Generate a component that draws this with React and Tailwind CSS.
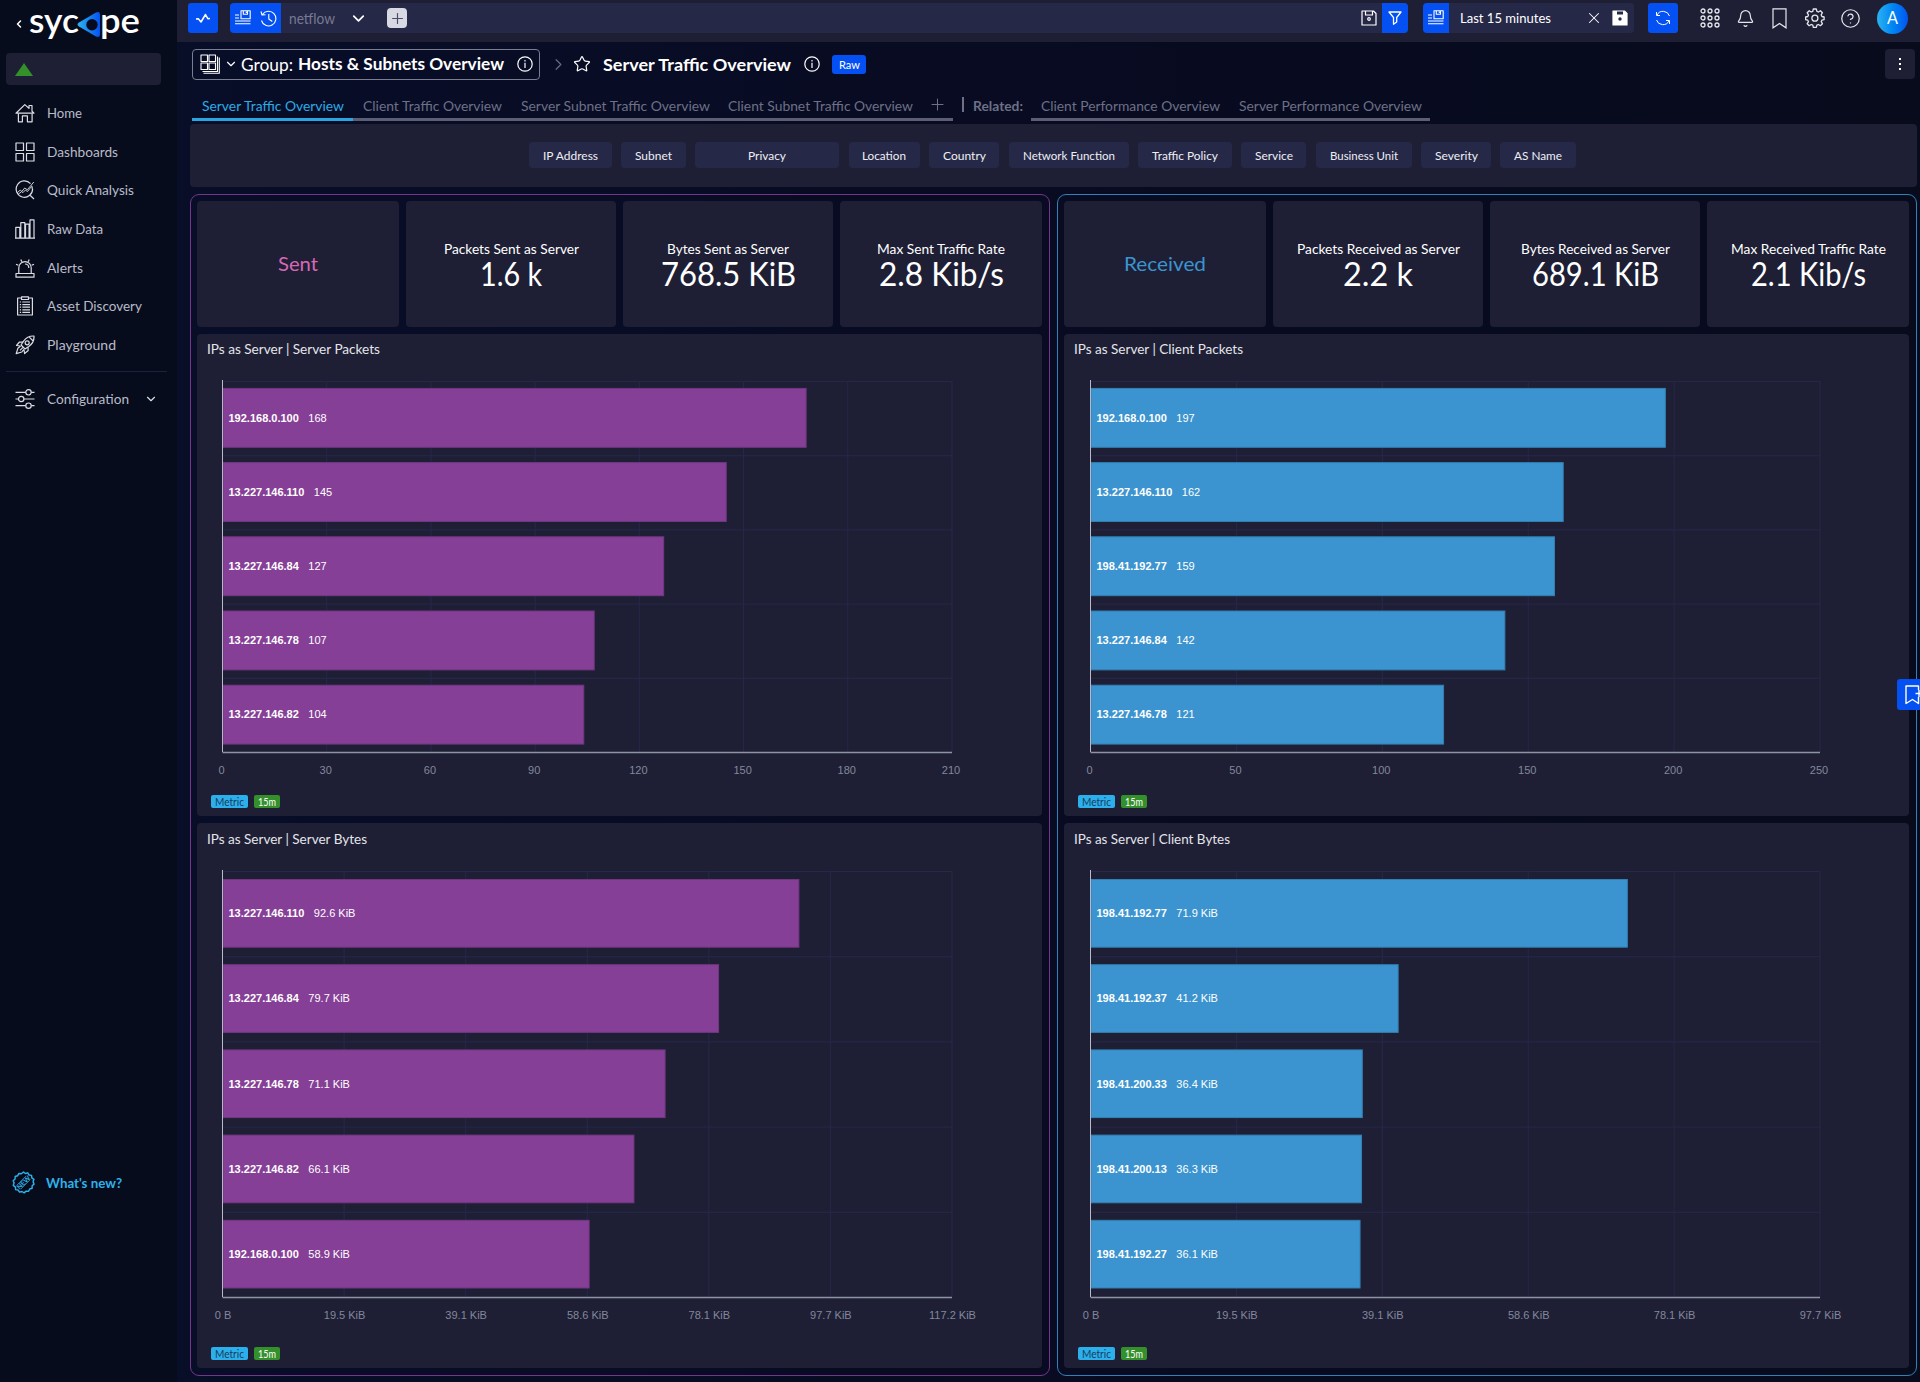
import {
  Bell,
  Bookmark,
  ChevronDown,
  ChevronLeft,
  ChevronRight,
  CircleHelp,
  Plus,
  Star,
  X,
} from "lucide-react"

const navItems = [
  { label: "Home", icon: "home", width: 35 },
  { label: "Dashboards", icon: "dashboards", width: 71 },
  { label: "Quick Analysis", icon: "analysis", width: 87 },
  { label: "Raw Data", icon: "raw", width: 56 },
  { label: "Alerts", icon: "alerts", width: 36 },
  { label: "Asset Discovery", icon: "assets", width: 95 },
  { label: "Playground", icon: "playground", width: 69 },
]

const tabs = [
  { label: "Server Traffic Overview", box: "w-[161px]", width: 142 },
  { label: "Client Traffic Overview", box: "w-[158px]", width: 139 },
  { label: "Server Subnet Traffic Overview", box: "w-[207px]", width: 189 },
  { label: "Client Subnet Traffic Overview", box: "w-[205px]", width: 185 },
]

const relatedTabs = [
  { label: "Client Performance Overview", box: "w-[198px]", width: 179 },
  { label: "Server Performance Overview", box: "w-[201px]", width: 183 },
]

const filters = [
  { label: "IP Address", box: "w-[83px]", width: 55 },
  { label: "Subnet", box: "w-[65px]", width: 37 },
  { label: "Privacy", box: "w-[144px]", width: 38 },
  { label: "Location", box: "w-[71px]", width: 44 },
  { label: "Country", box: "w-[70px]", width: 43 },
  { label: "Network Function", box: "w-[120px]", width: 92 },
  { label: "Traffic Policy", box: "w-[94px]", width: 66 },
  { label: "Service", box: "w-[65px]", width: 38 },
  { label: "Business Unit", box: "w-[96px]", width: 68 },
  { label: "Severity", box: "w-[70px]", width: 43 },
  { label: "AS Name", box: "w-[76px]", width: 48 },
]

const groups = [
  {
    title: "Sent",
    titleWidth: 40,
    titleColor: "#d668b4",
    border: "border-[#74368a]",
    plotLeft: 25.5,
    fill: "#863f97",
    stroke: "#733782",
    stats: [
      { label: "Packets Sent as Server", width: 135, value: "1.6 k", valueWidth: 62 },
      { label: "Bytes Sent as Server", width: 122, value: "768.5 KiB", valueWidth: 135 },
      { label: "Max Sent Traffic Rate", width: 128, value: "2.8 Kib/s", valueWidth: 125 },
    ],
    packets: {
      title: "IPs as Server | Server Packets",
      titleWidth: 173,
      max: 210,
      ticks: ["0", "30", "60", "90", "120", "150", "180", "210"],
      rows: [
        ["192.168.0.100", 168, "168"],
        ["13.227.146.110", 145, "145"],
        ["13.227.146.84", 127, "127"],
        ["13.227.146.78", 107, "107"],
        ["13.227.146.82", 104, "104"],
      ],
    },
    bytes: {
      title: "IPs as Server | Server Bytes",
      titleWidth: 160,
      max: 117.2,
      ticks: ["0 B", "19.5 KiB", "39.1 KiB", "58.6 KiB", "78.1 KiB", "97.7 KiB", "117.2 KiB"],
      rows: [
        ["13.227.146.110", 92.6, "92.6 KiB"],
        ["13.227.146.84", 79.7, "79.7 KiB"],
        ["13.227.146.78", 71.1, "71.1 KiB"],
        ["13.227.146.82", 66.1, "66.1 KiB"],
        ["192.168.0.100", 58.9, "58.9 KiB"],
      ],
    },
  },
  {
    title: "Received",
    titleWidth: 82,
    titleColor: "#3b94cf",
    border: "border-[#2f81b6]",
    plotLeft: 26.5,
    fill: "#3b94cf",
    stroke: "#3280b4",
    stats: [
      { label: "Packets Received as Server", width: 163, value: "2.2 k", valueWidth: 70 },
      { label: "Bytes Received as Server", width: 149, value: "689.1 KiB", valueWidth: 127 },
      { label: "Max Received Traffic Rate", width: 155, value: "2.1 Kib/s", valueWidth: 115 },
    ],
    packets: {
      title: "IPs as Server | Client Packets",
      titleWidth: 169,
      max: 250,
      ticks: ["0", "50", "100", "150", "200", "250"],
      rows: [
        ["192.168.0.100", 197, "197"],
        ["13.227.146.110", 162, "162"],
        ["198.41.192.77", 159, "159"],
        ["13.227.146.84", 142, "142"],
        ["13.227.146.78", 121, "121"],
      ],
    },
    bytes: {
      title: "IPs as Server | Client Bytes",
      titleWidth: 156,
      max: 97.7,
      ticks: ["0 B", "19.5 KiB", "39.1 KiB", "58.6 KiB", "78.1 KiB", "97.7 KiB"],
      rows: [
        ["198.41.192.77", 71.9, "71.9 KiB"],
        ["198.41.192.37", 41.2, "41.2 KiB"],
        ["198.41.200.33", 36.4, "36.4 KiB"],
        ["198.41.200.13", 36.3, "36.3 KiB"],
        ["198.41.192.27", 36.1, "36.1 KiB"],
      ],
    },
  },
]

// Label set to an exact advance width
function Label({ children, width, size = 14, weight = 400, color = "currentColor" }) {
  const height = Math.round(size * 1.4)
  return (
    <svg width={width} height={height} className="block shrink-0 overflow-visible">
      <text
        x="0"
        y={Math.round(size * 1.05)}
        textLength={width}
        lengthAdjust="spacingAndGlyphs"
        fontSize={size}
        fontWeight={weight}
        fill={color}
      >
        {children}
      </text>
    </svg>
  )
}

function Icon({ children, size = 20, box = 20, stroke = 1.2, className = "" }) {
  return (
    <svg
      width={size}
      height={size}
      viewBox={`0 0 ${box} ${box}`}
      fill="none"
      stroke="currentColor"
      strokeWidth={stroke}
      strokeLinejoin="round"
      className={`block shrink-0 ${className}`}
    >
      {children}
    </svg>
  )
}

const navIcons = {
  home: (
    <>
      <path d="M1 10.2 9.8 1.6 14 5.4V2.5h3v5.8l2 1.9H1Z" />
      <path d="M3.4 10.4v8.4h4v-5.9h5v5.9h4.7v-8.4" />
    </>
  ),
  dashboards: (
    <>
      <rect x="1" y="1" width="7.5" height="7.5" />
      <rect x="11.5" y="1" width="7.5" height="7.5" />
      <rect x="1" y="11.5" width="7.5" height="7.5" />
      <rect x="11.5" y="11.5" width="7.5" height="7.5" />
    </>
  ),
  analysis: (
    <>
      <path d="M15.5 3.6A8.2 8.2 0 1 0 17.6 9M16.5 5.8c.6 1 .8 2 .8 3.2M14.8 15l4.2 4" />
      <path d="M2.2 12.8 5.3 10l1.5 1.5 2.9-3.5 2.6 1.8L18.8 2M3.5 14l3.2-2.4 1.2 1.1 2.4-2.6 2.2 1.4 3.6-4.5" strokeWidth=".9" />
    </>
  ),
  raw: (
    <>
      <path d="M.8 8.3h4v10.9h-4zM5.8 3.6h4v15.6h-4zM10.5 5.2h3.6v14h-3.6zM15 .9h4v18.3h-4zM0 19.2h20" />
    </>
  ),
  alerts: (
    <>
      <path d="M1 15.5h18v3.7H1zM3.8 15.5V9.8a6.2 6.2 0 0 1 12.4 0v5.7M10 6c2.3 0 3.8 1.5 3.8 4" />
      <path d="m1 6.2 2.3 1M5.8 1.5l1 2.2M14.2 1.5l-1 2.2M19 6.2l-2.3 1" />
    </>
  ),
  assets: (
    <>
      <path d="M6.5 2H2.6v17h14.8V2h-3.9M6.5.9h7v2.6h-7z" />
      <path d="M4.8 6h1.3M4.8 8.6h1.3M4.8 11.2h1.3M4.8 13.8h1.3M4.8 16.3h1.3M7.3 6H15M7.3 8.6H15M7.3 11.2H15M7.3 13.8H15M7.3 16.3H15" />
    </>
  ),
  playground: (
    <>
      <path d="M19 1c-4.7-.2-8 1.7-10.4 5.2L6 10l4 4 3.8-2.6C17.4 8.8 19.300 5.500 19 1ZM14 1.800 18.200 6" />
      <circle cx="12.2" cy="7.8" r="2" />
      <path d="M8 7.2 4.5 7 1.5 10.5 5.2 11M12.9 12l.3 3.5-3.600 3L9 14.800M5.600 11 2.900 13.200 1.200 18.600 6.800 17 8.900 14.300M5 15.400 8 12.400" />
    </>
  ),
  config: (
    <>
      <path d="M.5 3.3H10.7M16.3 3.3H19.5M.5 10H3.5M9 10h10.500M.5 16.700h10.200M16.300 16.700h3.200" />
      <circle cx="13.5" cy="3.3" r="2.7" />
      <circle cx="6.2" cy="10" r="2.7" />
      <circle cx="13.5" cy="16.7" r="2.7" />
    </>
  ),
}

function Logo() {
  return (
    <svg width="112" height="34" viewBox="0 0 112 34" className="block overflow-visible">
      <defs>
        <linearGradient id="logo" x1="0" y1="0" x2="1" y2="0">
          <stop offset="0" stopColor="#2cb5f2" />
          <stop offset="1" stopColor="#0453f0" />
        </linearGradient>
      </defs>
      <g fill="#fff" fontSize="34" fontWeight="600">
        <text x="-1" y="25" textLength="50" lengthAdjust="spacingAndGlyphs">syc</text>
        <text x="70" y="25" textLength="40" lengthAdjust="spacingAndGlyphs">pe</text>
      </g>
      <path
        d="M49 14.500 66 4.500q4-1.700 4 2v20q0 3.500-4 2L49 18.500q-3-2 0-4Z"
        fill="url(#logo)"
      />
      <circle cx="62" cy="16.700" r="5.700" fill="#070b1d" />
    </svg>
  )
}

function Sidebar() {
  return (
    <aside className="flex w-[177px] shrink-0 flex-col bg-[#070c1d] text-[#b9bbc8]">
      <div className="flex h-[53px] items-start gap-[5px] pt-[8px] pl-[13px]">
        <ChevronLeft size={12} strokeWidth={3} className="mt-[10px] text-white" />
        <Logo />
      </div>
      <div className="ml-[6px] flex h-8 w-[155px] items-center rounded bg-[#1e1f35] pl-[9px]">
        <svg width="18" height="13" className="block">
          <path d="M9 0 18 13H0Z" fill="#33902a" />
        </svg>
      </div>
      <nav className="mt-[9px] flex flex-col">
        {navItems.map((item) => (
          <div key={item.label} className="flex h-[38.6px] items-center gap-[12px] pl-[15px]">
            <Icon className="text-[#dcdde4]">{navIcons[item.icon]}</Icon>
            <Label width={item.width} size={14}>{item.label}</Label>
          </div>
        ))}
      </nav>
      <div className="mt-[7px] ml-[6px] h-px w-[161px] bg-[#1d2140]" />
      <div className="mt-[8px] flex h-[38px] items-center pl-[15px]">
        <Icon className="mr-[12px] text-[#dcdde4]">{navIcons.config}</Icon>
        <Label width={82} size={14}>Configuration</Label>
        <ChevronDown size={14} strokeWidth={2} className="ml-[15px] text-[#dcdde4]" />
      </div>
      <div className="mt-[753px] flex items-center gap-[11px] pl-[12px] text-[#2fb1ea]">
        <Icon size={23} box={24} stroke={1.5}>
          <path d="m12 1 2 1.600 2.500-.7 1.300 2.300 2.600.4.3 2.600 2.200 1.500L22 11.200l1 2.500-2 1.700v2.600l-2.500.8-1.200 2.300-2.600-.1-2 1.800-2.300-1.400-2.500.7-1.500-2.200-2.600-.5-.2-2.600L1.300 15 2.200 12.500 1.200 10.100l2-1.700.1-2.600 2.500-.8L7.100 2.700l2.600.2Z" />
          <text
            x="12"
            y="14.5"
            fontSize="7"
            fontWeight="700"
            fill="currentColor"
            stroke="none"
            textAnchor="middle"
            transform="rotate(-45 12 12)"
          >
            NEW
          </text>
          <path d="m5 15 10-10M9 19 19 9" strokeWidth=".8" />
        </Icon>
        <Label width={76} size={14} weight={700}>What's new?</Label>
      </div>
    </aside>
  )
}

function ListSaveIcon() {
  return (
    <Icon size={16} box={16} stroke={1.1}>
      <path d="M0 5h4M0 8h4M0 11h15.500M0 13.700h15.500M6 .8h9.200v8H6ZM8.300.8v3.500h4.200V.8M11.300 1.500v1.500" />
    </Icon>
  )
}

function InfoIcon() {
  return (
    <Icon size={16} box={16} stroke={1.2} className="text-white">
      <circle cx="8" cy="8" r="7.2" />
      <path d="M8 6.800V12M8 4v1.500" />
    </Icon>
  )
}

function TopBar() {
  return (
    <header className="flex h-[42px] items-start bg-[#1e1f35] pt-[3px] pl-[11px] text-white">
      <div className="flex size-[30px] items-center justify-center rounded-[3px] bg-[#0450f2]">
        <Icon size={16} box={16} stroke={1.5}>
          <path d="m1 9 2.300-.2L6 12l4.500-7.500 2.300 4.200L15 8.500" />
        </Icon>
      </div>
      <div className="ml-[12px] flex h-[30px] w-[1178px] items-center overflow-hidden rounded bg-[#262847]">
        <div className="flex h-full w-[51px] items-center gap-[9px] bg-[#0450f2] pl-[5px]">
          <ListSaveIcon />
          <Icon size={17} box={17} stroke={1.1}>
            <path d="M2.500 4.500A7.300 7.300 0 1 1 1.500 10.500M1 1.500l1 3.500 3.500-.3M8.800 4v5l3.500 2.500" />
          </Icon>
        </div>
        <div className="ml-[8px] text-[#777a92]">
          <Label width={46} size={15}>netflow</Label>
        </div>
        <ChevronDown size={19} strokeWidth={2.2} className="ml-[14px]" />
        <div className="ml-[19px] flex size-5 items-center justify-center rounded bg-[#d8d9e3]">
          <Plus size={17} strokeWidth={1.6} className="text-[#4a4c66]" />
        </div>
        <Icon size={16} box={16} stroke={1.2} className="ml-auto">
          <path d="M1 1h11.500L15 3.500V15H1ZM4.500 1v4h7V1" />
          <circle cx="8" cy="9" r="1.3" />
        </Icon>
        <div className="ml-[5px] flex h-full w-[26px] items-center justify-center bg-[#0450f2]">
          <Icon size={14} box={14} stroke={1.3}>
            <path d="M1 1h12L8.700 6.500V11L5.500 13.200V6.500Z" />
          </Icon>
        </div>
      </div>
      <div className="ml-[15px] flex h-[30px] w-[211px] items-center overflow-hidden rounded bg-[#262847]">
        <div className="flex h-full w-[26px] items-center justify-center bg-[#0450f2]">
          <ListSaveIcon />
        </div>
        <div className="ml-[11px]">
          <Label width={91} size={14}>Last 15 minutes</Label>
        </div>
        <X size={18} strokeWidth={1.4} className="ml-[34px]" />
        <Icon size={16} box={16} className="ml-[9px]">
          <path d="M1 1h11.500L15 3.500V15H1Z" fill="#fff" />
          <path d="M5 1.500h6v3H5Z" fill="#262847" stroke="none" />
          <circle cx="8" cy="9" r="1.7" fill="#262847" stroke="none" />
        </Icon>
      </div>
      <div className="ml-[14px] flex size-[30px] items-center justify-center rounded-[3px] bg-[#0450f2]">
        <Icon size={16} box={16} stroke={1}>
          <path d="M14.500 6A6.800 6.800 0 0 0 2 5M1.500 2v3.500H5M1.500 10A6.800 6.800 0 0 0 14 11M14.500 14v-3.500H11" />
        </Icon>
      </div>
      <div className="flex h-[30px] items-center text-[#e6e7ec]">
        <Icon size={20} box={20} stroke={1.3} className="ml-[22px]">
          {[3, 10, 17].map((y) =>
            [3, 10, 17].map((x) => <circle key={`${x}-${y}`} cx={x} cy={y} r="2" />)
          )}
        </Icon>
        <Bell size={19} strokeWidth={1.5} className="ml-[16px]" />
        <svg width="15" height="21" viewBox="0 0 15 21" fill="none" stroke="currentColor" strokeWidth="1.2" className="ml-[17px] block">
          <path d="M1 .8h13v19L7.500 15.500 1 19.800Z" />
        </svg>
        <Icon size={20} box={20} stroke={1.3} className="ml-[18px]">
          <path d="m8.300 1-.5 2.300-1.600.7-2-1.300-2 2.100L3.500 6.900l-.7 1.600-2.200.5v2.600l2.200.6.700 1.500-1.300 2 2 2 2-1.200 1.600.7.5 2.200h3l.6-2.200 1.500-.7 2 1.200 2-2-1.200-2 .7-1.500 2.200-.6V9l-2.200-.5-.7-1.600 1.200-2.100-2-2.100-2 1.300-1.500-.7L11.300 1Z" />
          <circle cx="9.9" cy="10.2" r="3" />
        </Icon>
        <CircleHelp size={21} strokeWidth={1.4} className="ml-[15px]" />
        <div className="ml-[16px] flex size-[31px] items-center justify-center rounded-full bg-linear-to-r from-[#2bb2f1] to-[#0553f1] text-white">
          <Label width={11} size={17}>A</Label>
        </div>
      </div>
    </header>
  )
}

function Breadcrumbs() {
  return (
    <div className="mt-[7px] flex h-[30px] items-center text-white">
      <div className="ml-[2px] flex h-[31px] w-[348px] items-center rounded border border-[#7b7e91] pl-[7px]">
        <Icon size={20} box={20} stroke={1.1}>
          <path d="M1 1h6.500v6.500H1ZM9 1h6.500v6.500H9ZM1 9h6.500v6.500H1ZM9 9h6.500v6.500H9ZM2.500 17.500h15v-15M3.500 19.300h15.800V3.500" />
        </Icon>
        <ChevronDown size={14} strokeWidth={2} className="mr-[3px] ml-[4px]" />
        <Label width={52} size={18}>Group:</Label>
        <div className="mr-[13px] ml-[5px]">
          <Label width={206} size={17} weight={700}>Hosts &amp; Subnets Overview</Label>
        </div>
        <InfoIcon />
      </div>
      <ChevronRight size={19} strokeWidth={1.5} className="ml-[9px] text-[#686b80]" />
      <Star size={18} strokeWidth={1.6} className="mr-[12px] ml-[5px]" />
      <div className="pt-px">
        <Label width={188} size={17} weight={700}>Server Traffic Overview</Label>
      </div>
      <div className="ml-[13px]">
        <InfoIcon />
      </div>
      <div className="ml-[12px] flex h-[19px] w-[34px] items-center justify-center rounded-[3px] bg-[#0450f2]">
        <Label width={21} size={12}>Raw</Label>
      </div>
      <div className="mr-[2px] ml-auto flex h-[30px] w-[30px] items-center justify-center rounded bg-[#1e1f35]">
        <Icon size={14} box={14} stroke={0}>
          <path d="M6 1h2v2H6zM6 6h2v2H6zM6 11h2v2H6z" fill="#fff" />
        </Icon>
      </div>
    </div>
  )
}

function Tabs() {
  return (
    <div className="mt-[11px] flex h-[31px] pl-[2px] text-[#6d7086]">
      <div className="flex">
        {tabs.map((tab, i) => (
          <div
            key={tab.label}
            className={`flex items-center border-b-[3px] pt-[3px] pl-[9.5px] ${tab.box} ${
              i === 0 ? "border-[#2aa6de] text-[#2cabe4]" : "border-[#5c5e73]"
            }`}
          >
            <Label width={tab.width} size={14}>{tab.label}</Label>
          </div>
        ))}
        <div className="flex w-[30px] items-center border-b-[3px] border-[#5c5e73] pt-[1px] pl-[5px]">
          <Plus size={19} strokeWidth={1.3} />
        </div>
      </div>
      <div className="mt-[7px] ml-[9px] h-[15px] w-[2px] bg-[#6d7086]" />
      <div className="mr-[8px] ml-[9px] flex items-center">
        <Label width={50} size={14} weight={700}>Related:</Label>
      </div>
      {relatedTabs.map((tab) => (
        <div key={tab.label} className={`flex items-center border-b-[3px] border-[#5c5e73] pt-[3px] pl-[9.5px] ${tab.box}`}>
          <Label width={tab.width} size={14}>{tab.label}</Label>
        </div>
      ))}
    </div>
  )
}

function BarChart({ chart, left, fill, stroke, plotHeight, height }) {
  const top = 17
  const width = 729.5
  const bottom = top + plotHeight
  const rowHeight = plotHeight / chart.rows.length
  const barHeight = rowHeight * 0.8
  const step = width / (chart.ticks.length - 1)

  return (
    <svg width="845" height={height} className="block font-['Liberation_Sans',Arial,sans-serif] text-[11px]">
      {chart.rows.map((row, i) => (
        <line key={row[0]} x1={left} x2={left + width} y1={top + i * rowHeight + 0.5} y2={top + i * rowHeight + 0.5} stroke="#26284a" />
      ))}
      {chart.ticks.map((tick, i) => (
        <g key={tick}>
          <line x1={left + i * step} x2={left + i * step} y1={top} y2={bottom} stroke="#26284a" />
          <text x={left + i * step - 1 + (tick.includes("B") ? 1.5 : 0)} y={bottom + 21.5} fill="#84879b" textAnchor="middle">
            {tick}
          </text>
        </g>
      ))}
      {chart.rows.map(([ip, value, text], i) => {
        const y = top + i * rowHeight + (rowHeight - barHeight) / 2
        return (
          <g key={ip}>
            <rect
              x={left + 0.5}
              y={y}
              width={(value / chart.max) * width - 0.5}
              height={barHeight - 0.5}
              fill={fill}
              stroke={stroke}
            />
            <text x={left + 6} y={y + barHeight / 2 + 3.5} fill="#fff">
              <tspan fontWeight="700">{ip}</tspan>
              <tspan dx="9.5">{text}</tspan>
            </text>
          </g>
        )
      })}
      <path d={`M${left} ${top - 1}V${bottom}`} stroke="#b9bac8" />
      <path d={`M${left} ${bottom + 0.5}H${left + width}`} stroke="#8f92a4" strokeWidth="1.5" />
    </svg>
  )
}

function ChartCard({ chart, group, plotHeight, svgHeight, className }) {
  return (
    <section className={`rounded bg-[#1e1f35] ${className}`}>
      <div className="flex items-center pl-[10px] text-[#e4e5ea]">
        <Label width={chart.titleWidth} size={13}>{chart.title}</Label>
      </div>
      <BarChart
        chart={chart}
        left={group.plotLeft}
        fill={group.fill}
        stroke={group.stroke}
        plotHeight={plotHeight}
        height={svgHeight}
      />
      <div className="flex gap-[6px] pl-[14px]">
        <div className="flex h-[13px] w-[37px] items-center justify-center rounded-[2px] bg-[#2cb0ec] text-[#173b5c]">
          <Label width={29} size={11}>Metric</Label>
        </div>
        <div className="flex h-[13px] w-[26px] items-center justify-center rounded-[2px] bg-[#33902a] text-white">
          <Label width={18} size={11}>15m</Label>
        </div>
      </div>
    </section>
  )
}

function TrafficGroup({ group }) {
  const cards = ["w-[210px]", "w-[210px]", "w-[202px]"]
  return (
    <div
      className={`flex h-[1182px] w-[860px] flex-col gap-[7px] rounded-[9px] border pt-[6px] pr-[7px] pl-[6px] ${group.border}`}
    >
      <div className="flex h-[126px] justify-between">
        <div className="flex w-[202px] items-center justify-center rounded bg-[#1e1f35]">
          <Label width={group.titleWidth} size={20} color={group.titleColor}>{group.title}</Label>
        </div>
        {group.stats.map((stat, i) => (
          <div
            key={stat.label}
            className={`flex flex-col items-center rounded bg-[#1e1f35] pt-[39px] text-white ${cards[i]}`}
          >
            <Label width={stat.width} size={13}>{stat.label}</Label>
            <div className="-mt-[7px]">
              <Label width={stat.valueWidth} size={33}>{stat.value}</Label>
            </div>
          </div>
        ))}
      </div>
      <ChartCard
        chart={group.packets}
        group={group}
        plotHeight={371}
        svgHeight={431}
        className="h-[482px] [&>div:first-child]:h-[30px]"
      />
      <ChartCard
        chart={group.bytes}
        group={group}
        plotHeight={426}
        svgHeight={493}
        className="h-[545px] [&>div:first-child]:h-[31px]"
      />
    </div>
  )
}

export default function App() {
  return (
    <div className="relative flex h-[1382px] w-[1920px] overflow-hidden bg-[#070b1c] font-[Lato,'Open_Sans',sans-serif]">
      <Sidebar />
      <div className="flex w-[1743px] flex-col bg-linear-to-r from-[#080d28] via-[#080b21] to-[#070b1c]">
        <TopBar />
        <main className="pr-[3px] pl-[13px]">
          <Breadcrumbs />
          <Tabs />
          <div className="mt-[3px] flex h-[63px] items-center justify-center gap-[9.4px] rounded bg-[#1e1f35] pr-[2px] pb-[1px]">
            {filters.map((filter) => (
              <div
                key={filter.label}
                className={`flex h-[26px] items-center justify-center rounded bg-[#262847] text-[#eeeff3] ${filter.box}`}
              >
                <Label width={filter.width} size={12}>{filter.label}</Label>
              </div>
            ))}
          </div>
          <div className="mt-[7px] flex justify-between">
            {groups.map((group) => (
              <TrafficGroup key={group.title} group={group} />
            ))}
          </div>
        </main>
      </div>
      <div className="absolute top-[679px] right-0 flex h-[31px] w-[23px] items-center overflow-hidden rounded-l-[3px] bg-[#0450f2] pl-[8px] text-white">
        <Icon size={20} box={20} stroke={1.4}>
          <path d="M13.500 5V1H1v17.500l6.500-4 6 4V12M10.500 8.500h7M14 5v7" />
        </Icon>
      </div>
    </div>
  )
}
